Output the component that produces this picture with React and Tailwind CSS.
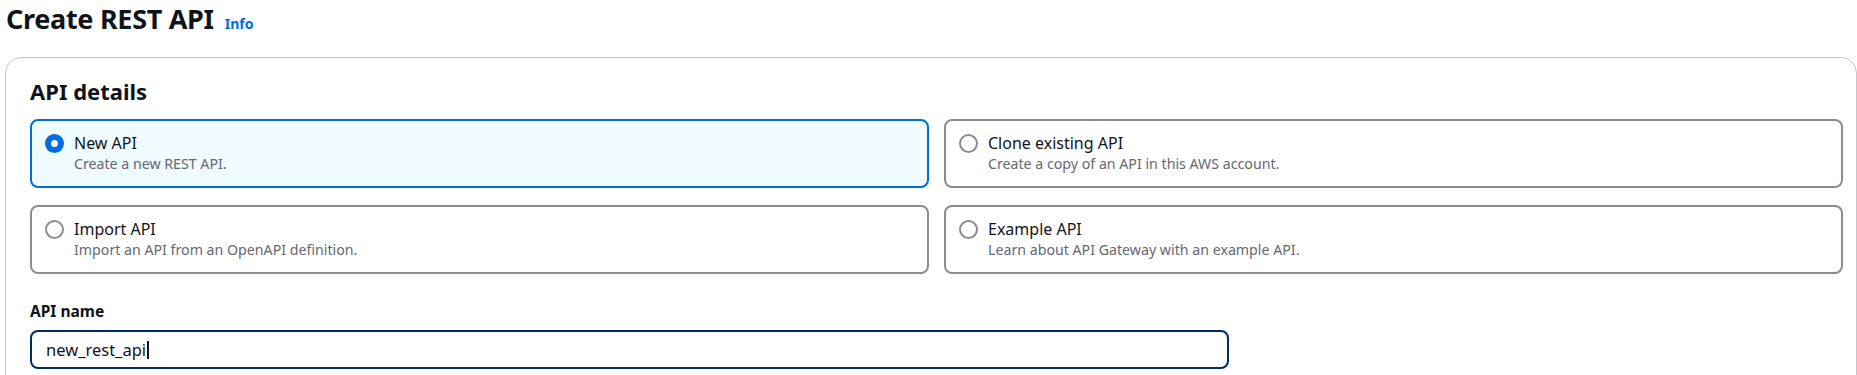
import React, { useState } from 'react';

const OPTIONS = [
  { id: 'new', label: 'New API', desc: 'Create a new REST API.' },
  { id: 'clone', label: 'Clone existing API', desc: 'Create a copy of an API in this AWS account.' },
  { id: 'import', label: 'Import API', desc: 'Import an API from an OpenAPI definition.' },
  { id: 'example', label: 'Example API', desc: 'Learn about API Gateway with an example API.' },
];

function Radio({ checked }) {
  if (checked) {
    return (
      <span className="mt-[1.5px] flex h-[19px] w-[19px] shrink-0 items-center justify-center rounded-full bg-[#006ce0]">
        <span className="h-[7px] w-[7px] rounded-full bg-white" />
      </span>
    );
  }
  return <span className="mt-[1.5px] h-[19px] w-[19px] shrink-0 rounded-full border-2 border-[#8c8c94] bg-white" />;
}

function Tile({ option, selected, onSelect }) {
  return (
    <button
      type="button"
      onClick={() => onSelect(option.id)}
      className={`flex items-start gap-[10px] rounded-lg border-2 pl-[13px] pr-4 pt-[11px] pb-[12px] text-left ${
        selected ? 'border-[#006ce0] bg-[#f0fbff]' : 'border-[#8c8c94] bg-white'
      }`}
    >
      <Radio checked={selected} />
      <div className="flex flex-col">
        <span className="text-[16px] leading-[22px] text-[#0f141a]">{option.label}</span>
        <span className="text-[14.2px] leading-[20px] text-[#656871]">{option.desc}</span>
      </div>
    </button>
  );
}

export default function App() {
  const [choice, setChoice] = useState('new');

  return (
    <div className="min-h-screen bg-white font-['Noto_Sans',sans-serif] text-[#0f141a]">
      {/* Page header */}
      <div className="flex items-baseline gap-[11px] pl-[6px] pt-[1px]">
        <h1 className="text-[27px] font-bold leading-[36px] tracking-[-0.3px]">Create REST API</h1>
        <a className="text-[14px] font-bold text-[#006ce0]">Info</a>
      </div>

      {/* API details container */}
      <div className="ml-[5px] mt-[20px] rounded-[16px] border border-[#c6c6cd] pl-[24px] pr-[13px] pt-[18px] pb-6">
        <h2 className="text-[22px] font-bold leading-[30px]">API details</h2>

        <div className="mt-[13px] grid grid-cols-2 gap-x-[15px] gap-y-[17px]">
          {OPTIONS.map((o) => (
            <Tile key={o.id} option={o} selected={choice === o.id} onSelect={setChoice} />
          ))}
        </div>

        <div className="mt-[27px] text-[15.5px] font-bold leading-[20px]">API name</div>
        <div className="mt-[9px] flex h-[39px] w-[1199px] items-center rounded-lg border-2 border-[#002b66] px-[14px]">
          <span className="text-[16.5px] leading-[22px] text-[#0f141a]">new_rest_api</span>
          <span className="ml-[1px] h-[18px] w-[2px] bg-[#0f141a]" />
        </div>
      </div>
    </div>
  );
}
